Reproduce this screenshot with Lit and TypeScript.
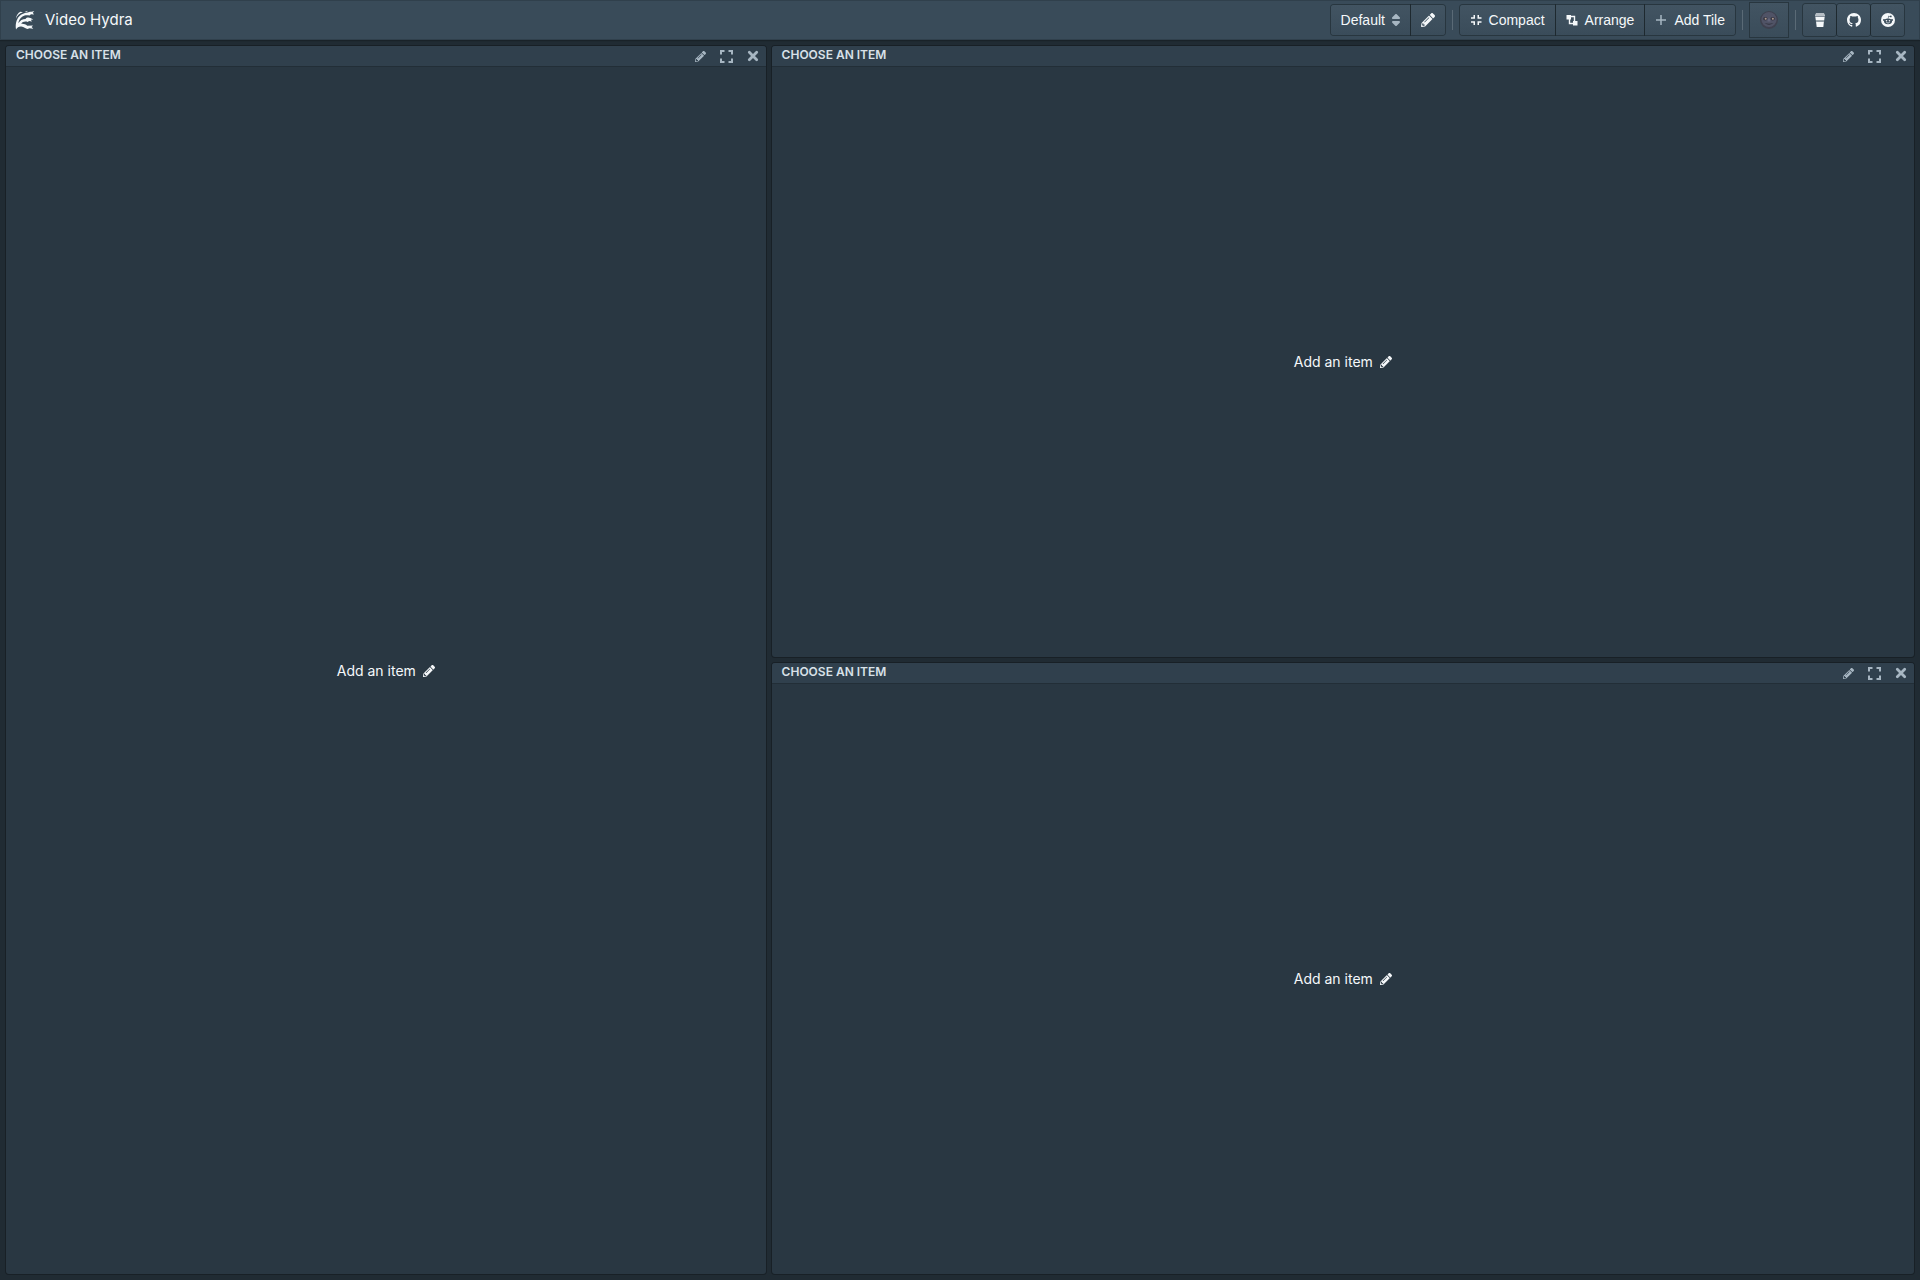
import { LitElement, html, css, svg } from "lit";
import { customElement, property } from "lit/decorators.js";

const PENCIL = svg`<path d="M497.9 142.1l-46.1 46.1c-4.7 4.7-12.3 4.7-17 0l-111-111c-4.7-4.7-4.7-12.3 0-17l46.1-46.1c18.7-18.7 49.1-18.7 67.9 0l60.1 60.1c18.8 18.7 18.8 49.1 0 67.9zM284.2 99.8L21.6 362.4.4 483.9c-2.9 16.4 11.4 30.6 27.8 27.8l121.5-21.3 262.6-262.6c4.7-4.7 4.7-12.3 0-17l-111-111c-4.8-4.7-12.4-4.7-17.1 0zM124.1 339.9c-5.5-5.5-5.5-14.3 0-19.8l154-154c5.5-5.5 14.3-5.5 19.8 0s5.500 14.300 0 19.800l-154 154c-5.500 5.500-14.300 5.500-19.800 0zM88 424h48v36.300l-64.500 11.300-31.100-31.100L51.700 376H88v48z"/>`;

const pencil = (size: number) =>
  html`<svg aria-hidden="true" width=${size} height=${size} viewBox="0 0 512 512" fill="currentColor">${PENCIL}</svg>`;

const logo = html`<svg aria-hidden="true" width="20" height="20" viewBox="0 0 20 20" fill="currentColor">
  <path d="M1 19.500C0 13 2 7.500 6 4.800C9 2.800 11 3 13.500 2.200C15.500 1.500 17 1.800 19.300 1L17.800 2.800L19 4.600L16 4.200L14.500 5.600C12 4.800 9.500 5.200 7.500 6.600C4.800 8.600 3.600 11 3.400 13.300C5 10.300 7.500 8.900 10.500 8.900C11.500 7.300 13.500 7 15.500 7.900L18.300 9.600L15.800 9.700L17 11.400L14 10.900L12.800 12C10 11 7.500 11.700 6.200 13.800C8.500 13.500 10.500 14.200 12.300 15.700L18 15.500L16.600 17L18.300 18.800L14.500 18.300L12.500 19C10.500 18.600 9 16.700 6.300 16.500C4 16.300 2.300 17.300 1 19.500Z"/>
  <path d="M1 8.800C2 5.400 4.200 3.200 8 2.200L5.500 1.800C3 3 1.300 5.300 1 8.800Z"/>
  <path d="M9.500 2L13 .8L11.500 2.200Z"/>
</svg>`;

const caret = html`<svg aria-hidden="true" class="caret" width="16" height="16" viewBox="0 0 16 16" fill="currentColor"><path d="M5 7h6a1.003 1.003 0 00.71-1.710l-3-3C8.530 2.110 8.280 2 8 2s-.53.11-.71.29l-3 3A1.003 1.003 0 005 7zm6 2H5a1.003 1.003 0 00-.71 1.710l3 3c.18.18.43.29.71.29s.53-.11.71-.29l3-3A1.003 1.003 0 0011 9z"/></svg>`;

const compact = html`<svg aria-hidden="true" width="12" height="12" viewBox="0 0 12 12" fill="none" stroke="currentColor" stroke-width="1.500"><path d="M1 4H4.250V1M11.500 4H8.250V1M1 8H4.250V11M11.500 8H8.250V11"/></svg>`;

const arrange = html`<svg aria-hidden="true" width="12" height="12" viewBox="0 0 12 12"><path fill="currentColor" d="M.500 1h4.500v4.500H.500zM7 7h4.500v4.500H7z"/><path d="M5 2.500H8.500V7M3.500 5V9.500H7" fill="none" stroke="currentColor" stroke-width="1.400"/></svg>`;

const plus = html`<svg aria-hidden="true" class="dim" width="12" height="12" viewBox="0 0 12 12"><path d="M6 1V11M1 6H11" stroke="currentColor" stroke-width="1.500"/></svg>`;

const moon = html`<svg aria-hidden="true" width="18" height="18" viewBox="0 0 18 18">
  <circle cx="9" cy="9" r="9" fill="#3e404e"/>
  <circle cx="9" cy="8.500" r="7.600" fill="#505366"/>
  <path d="M8 7.500L7.400 10.500H10.600L10 7.500Z" fill="#62647a"/>
  <ellipse cx="5.300" cy="7.800" rx="2.200" ry="1.700" fill="#353641"/>
  <ellipse cx="12.700" cy="7.800" rx="2.200" ry="1.700" fill="#353641"/>
  <circle cx="5.700" cy="7.800" r="1" fill="#b09c90"/>
  <circle cx="12.900" cy="7.800" r="1" fill="#b09c90"/>
  <path d="M4.500 12Q9 15.500 13.500 12Q9 13.300 4.500 12Z" fill="#30313c"/>
</svg>`;

const coffee = html`<svg aria-hidden="true" width="14" height="14" viewBox="0 0 14 14" fill="currentColor"><path opacity=".65" d="M3 0H11L11.500 1.500H12V3.300H2V1.500H2.500Z"/><path d="M2.300 3.800H11.700L11.200 7.200H2.800Z"/><path opacity=".45" d="M2.800 7.200H11.200L11 9H3Z"/><path d="M3.100 9H10.900L10.300 14H3.700Z"/></svg>`;

const github = html`<svg aria-hidden="true" width="14" height="14" viewBox="0 0 16 16" fill="currentColor"><path d="M8 0C3.580 0 0 3.580 0 8c0 3.540 2.290 6.530 5.470 7.590.4.07.55-.17.55-.38 0-.19-.01-.82-.01-1.490-2.010.37-2.530-.49-2.690-.94-.09-.23-.48-.94-.82-1.130-.28-.15-.68-.52-.01-.53.63-.01 1.080.58 1.230.82.72 1.210 1.870.87 2.330.66.07-.52.28-.87.51-1.070-1.780-.2-3.640-.89-3.640-3.950 0-.87.31-1.590.82-2.150-.08-.2-.36-1.020.08-2.120 0 0 .67-.21 2.200.82.64-.18 1.320-.27 2-.27s1.360.09 2 .27c1.530-1.040 2.200-.82 2.200-.82.44 1.100.16 1.920.08 2.120.51.56.82 1.270.82 2.150 0 3.070-1.870 3.750-3.650 3.950.29.25.54.73.54 1.480 0 1.070-.01 1.930-.01 2.200 0 .21.15.46.55.38A8.010 8.010 0 0016 8c0-4.420-3.580-8-8-8z"/></svg>`;

const reddit = html`<svg aria-hidden="true" width="14" height="14" viewBox="0 0 14 14">
  <circle cx="7" cy="7" r="7" fill="currentColor"/>
  <g fill="#3c4e5c"><ellipse cx="7" cy="8.300" rx="4" ry="2.900"/><circle cx="3" cy="6.900" r="1"/><circle cx="11" cy="6.900" r="1"/><circle cx="9.800" cy="3.400" r=".9"/><path d="M6.700 5.600L7.400 2.700L9.600 3.200V3.800L7.800 3.400L7.300 5.600Z"/></g>
  <circle cx="5.500" cy="7.700" r=".8" fill="currentColor"/><circle cx="8.500" cy="7.700" r=".8" fill="currentColor"/>
  <path d="M5.300 9.500Q7 10.600 8.700 9.500" fill="none" stroke="currentColor" stroke-width=".7"/>
</svg>`;

const expand = html`<svg aria-hidden="true" width="13" height="13" viewBox="0 0 13 13" fill="none" stroke="currentColor" stroke-width="2"><path d="M1 4.500V1H4.500M8.500 1H12V4.500M12 8.500V12H8.500M4.500 12H1V8.500"/></svg>`;

const cross = html`<svg aria-hidden="true" width="16" height="16" viewBox="0 0 16 16" fill="none" stroke="currentColor" stroke-width="2.800" stroke-linecap="round"><path d="M4.300 4.300L11.700 11.700M11.700 4.300L4.300 11.700"/></svg>`;

const base = css`
  * { box-sizing: border-box; }
  button, select { font: inherit; color: inherit; border: 0; margin: 0; cursor: pointer; }
  svg { display: block; flex: none; }
`;

@customElement("hydra-tile")
export class HydraTile extends LitElement {
  @property() heading = "Choose an item";

  static styles = [base, css`
    :host {
      display: flex;
      flex-direction: column;
      min-width: 0;
      margin: 3px;
      border-radius: 3px;
      overflow: hidden;
      background: #293742;
      box-shadow: 0 0 0 1px rgba(16, 22, 26, 0.5);
    }
    .bar {
      display: flex;
      align-items: center;
      justify-content: space-between;
      height: 21px;
      padding-left: 10px;
      background: #30404d;
      border-bottom: 1px solid #222e37;
      color: #d8e1e8;
    }
    .title { margin: 0; padding-bottom: 2px; font-size: 12px; line-height: 18px; font-weight: 600; text-transform: uppercase; }
    .tools { display: flex; color: #a7b6c2; }
    .tool { display: flex; align-items: center; justify-content: center; width: 26px; height: 20px; padding: 0; background: none; }
    .body { flex: 1; display: flex; align-items: center; justify-content: center; }
    .add { display: flex; align-items: center; gap: 7px; padding: 5px 10px; background: none; font-size: 14px; line-height: 20px; color: #f5f8fa; }
  `];

  render() {
    return html`
      <header class="bar">
        <h2 class="title">${this.heading}</h2>
        <div class="tools">
          <button class="tool" aria-label="Edit">${pencil(11)}</button>
          <button class="tool" aria-label="Expand">${expand}</button>
          <button class="tool" aria-label="Close">${cross}</button>
        </div>
      </header>
      <div class="body"><button class="add"><span>Add an item</span>${pencil(12)}</button></div>
    `;
  }
}

@customElement("app-root")
export class AppRoot extends LitElement {
  static styles = [base, css`
    :host {
      display: flex;
      flex-direction: column;
      min-height: 100vh;
      background: #202b33;
      color: #f5f8fa;
      font-family: Inter, "Open Sans", sans-serif;
      font-size: 14px;
    }
    .nav {
      display: flex;
      align-items: center;
      justify-content: space-between;
      height: 40px;
      padding: 0 16px 0 15px;
      background: #394b59;
      box-shadow: inset 0 0 0 1px rgba(16, 22, 26, 0.2), 0 1px 1px rgba(16, 22, 26, 0.4);
    }
    .brand { display: flex; align-items: center; gap: 10px; color: inherit; text-decoration: none; font-size: 15px; line-height: 20px; }
    .actions { display: flex; align-items: center; font-family: "Liberation Sans", Arial, sans-serif; line-height: 18px; }
    .group { display: flex; gap: 1px; }
    .btn {
      display: flex;
      align-items: center;
      justify-content: center;
      gap: 7px;
      min-width: 34px;
      height: 30px;
      padding: 0 10px;
      color: #f5f8fa;
      background: linear-gradient(to bottom, #425462, #3a4c5a);
      box-shadow: 0 0 0 1px rgba(16, 22, 26, 0.4);
    }
    .group > :first-child { border-radius: 3px 0 0 3px; }
    .group > :last-child { border-radius: 0 3px 3px 0; }
    .picker { position: relative; display: flex; padding: 0; }
    .select { appearance: none; height: 30px; padding: 0 24px 0 10px; background: none; }
    .select option { background: #30404d; }
    .caret { position: absolute; right: 6px; top: 7px; color: #a7b6c2; pointer-events: none; }
    .divider { width: 1px; height: 20px; margin: 0 7px; background: #5a6a76; }
    .dim { color: #a7b6c2; }
    .mood { width: 38px; height: 34px; padding: 0; }
    .links .btn { width: 33px; min-width: 33px; height: 32px; padding: 0; border-radius: 3px; }
    .tiles { flex: 1; display: grid; grid-template-columns: 2fr 3fr; grid-template-rows: 1fr 1fr; padding: 3px; }
    .tall { grid-row: span 2; }
  `];

  render() {
    return html`
      <nav class="nav">
        <a class="brand" href="#">${logo}<span>Video Hydra</span></a>
        <div class="actions">
          <div class="group">
            <div class="btn picker">
              <select class="select" aria-label="Layout"><option>Default</option></select>${caret}
            </div>
            <button class="btn" aria-label="Edit layout">${pencil(14)}</button>
          </div>
          <span class="divider"></span>
          <div class="group">
            <button class="btn">${compact}<span>Compact</span></button>
            <button class="btn">${arrange}<span>Arrange</span></button>
            <button class="btn">${plus}<span>Add Tile</span></button>
          </div>
          <span class="divider"></span>
          <button class="btn mood" aria-label="Toggle theme">${moon}</button>
          <span class="divider"></span>
          <div class="group links">
            <a class="btn" href="#" aria-label="Buy a coffee">${coffee}</a>
            <a class="btn" href="#" aria-label="GitHub">${github}</a>
            <a class="btn" href="#" aria-label="Reddit">${reddit}</a>
          </div>
        </div>
      </nav>
      <main class="tiles">
        <hydra-tile class="tall"></hydra-tile>
        <hydra-tile></hydra-tile>
        <hydra-tile></hydra-tile>
      </main>
    `;
  }
}
